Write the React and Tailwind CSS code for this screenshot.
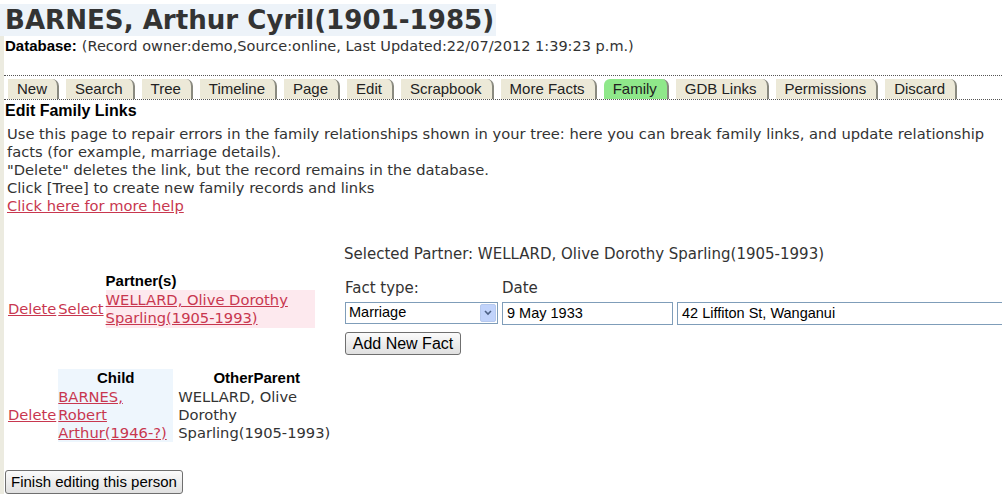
import React from "react";

const tabs = ["New","Search","Tree","Timeline","Page","Edit","Scrapbook","More Facts","Family","GDB Links","Permissions","Discard"];

const verdana = { fontFamily: '"DejaVu Sans", Verdana, sans-serif' };
const arial = { fontFamily: '"Liberation Sans", Arial, sans-serif' };

function Tab({ label }) {
  const active = label === "Family";
  return (
    <div
      className={`h-[20px] leading-[20px] pl-[9px] pr-[10px] whitespace-nowrap rounded-tr-[7px] border-r-2 border-[#8a8a80] text-[15px] text-[#222] ${active ? "bg-[#8fe88a] rounded-tl-[6px]" : "bg-[#ece9d8]"}`}
      style={arial}
    >
      {label}
    </div>
  );
}

export default function App() {
  return (
    <div className="w-[1002px] h-[504px] bg-white overflow-hidden text-[#333]" style={verdana}>
      <div className="pt-[4px]">
        <h1 className="inline-block bg-[#edf3f9] pl-[5px] pr-[2px] text-[26.1px] leading-[32px] font-bold text-[#333]" style={verdana}>
          BARNES, Arthur Cyril(1901-1985)
        </h1>
      </div>
      <div className="flex">
        <div className="w-[4px] bg-[#ecebe0] shrink-0" />
        <div className="flex-1 min-w-0">
          <div className="pl-[1px] h-[19px] leading-[19px] whitespace-nowrap">
            <span className="font-bold text-black text-[15px]" style={arial}>Database:</span>{" "}
            <span className="text-[14.5px]">(Record owner:demo,Source:online, Last Updated:22/07/2012 1:39:23 p.m.)</span>
          </div>
          <div className="mt-[20px] border-t border-b border-dotted border-[#555] flex gap-[7px] pl-[4px] pt-[3px]">
            {tabs.map((t) => <Tab key={t} label={t} />)}
          </div>
          <div className="pl-[1px] pt-[1px] text-[16px] leading-[19px] font-bold text-black" style={arial}>Edit Family Links</div>
          <div className="pl-[3px] pt-[5px] text-[14.7px] leading-[18px] pr-[6px]">
            <div>Use this page to repair errors in the family relationships shown in your tree: here you can break family links, and update relationship facts (for example, marriage details).</div>
            <div>"Delete" deletes the link, but the record remains in the database.</div>
            <div>Click [Tree] to create new family records and links</div>
            <a href="#" className="text-[#c8374f] underline">Click here for more help</a>
          </div>

          <div className="mt-[30px] flex items-start">
            <div className="w-[340px] shrink-0 pl-[2px] pt-[27px]">
              <table className="border-separate border-spacing-x-[2px] border-spacing-y-0 text-[14.7px] leading-[18px]">
                <thead>
                  <tr>
                    <th></th>
                    <th></th>
                    <th className="text-left font-bold text-black text-[15px] leading-[18px] p-0" style={arial}>Partner(s)</th>
                  </tr>
                </thead>
                <tbody>
                  <tr>
                    <td className="align-middle p-0"><a href="#" className="text-[#c8374f] underline">Delete</a></td>
                    <td className="align-middle p-0"><a href="#" className="text-[#c8374f] underline">Select</a></td>
                    <td className="align-middle p-0 pt-[1px] pb-[1px] bg-[#fde9ee] w-[209px]"><a href="#" className="text-[#c8374f] underline">WELLARD, Olive Dorothy Sparling(1905-1993)</a></td>
                  </tr>
                </tbody>
              </table>
            </div>
            <div className="flex-1 min-w-0 text-[15px]">
              <div className="leading-[18px] h-[18px] mb-[16px] whitespace-nowrap">Selected Partner: WELLARD, Olive Dorothy Sparling(1905-1993)</div>
              <div className="flex leading-[18px]">
                <div className="w-[158px] pl-[1px]">Fact type:</div>
                <div>Date</div>
              </div>
              <div className="flex gap-[4px] mt-[5px] items-start whitespace-nowrap" style={arial}>
                <div className="ml-[1px] w-[153px] h-[22px] border border-[#7f9db9] flex items-center text-[14.5px] text-black bg-white">
                  <span className="flex-1 pl-[3px]">Marriage</span>
                  <span className="w-[16px] h-[18px] mr-[1px] bg-[#c1d3fb] border border-[#b6c9ee] rounded-[2px] flex items-center justify-center">
                    <svg width="8" height="6" viewBox="0 0 8 6"><path d="M1 1 L4 4 L7 1" stroke="#4d6185" strokeWidth="1.6" fill="none" /></svg>
                  </span>
                </div>
                <div className="w-[171px] h-[23px] border border-[#7f9db9] bg-white text-[14.5px] text-black pl-[4px] leading-[21px]">9 May 1933</div>
                <div className="flex-1 h-[23px] border border-[#7f9db9] border-r-0 bg-white text-[14.5px] text-black pl-[4px] leading-[21px]">42 Liffiton St, Wanganui</div>
              </div>
              <div className="mt-[7px]">
                <button className="ml-[1px] w-[116px] h-[23px] border border-[#6f6f6f] rounded-[3px] bg-gradient-to-b from-[#fbfbfb] to-[#e0e0e0] text-[16px] text-black leading-[20px]" style={arial}>Add New Fact</button>
              </div>
            </div>
          </div>

          <div className="mt-[14px] pl-[2px]">
            <table className="border-separate border-spacing-x-[2px] border-spacing-y-0 text-[14.7px] leading-[18px]">
              <thead>
                <tr>
                  <th></th>
                  <th className="bg-[#eef6fd] font-bold text-black text-[15px] leading-[18px] text-center p-0" style={arial}>Child</th>
                  <th className="font-bold text-black text-[15px] leading-[18px] text-center p-0 pl-[3px]" style={arial}>OtherParent</th>
                </tr>
              </thead>
              <tbody>
                <tr>
                  <td className="align-middle p-0"><a href="#" className="text-[#c8374f] underline">Delete</a></td>
                  <td className="align-top p-0 pt-[1px] bg-[#eef6fd] w-[115px]"><a href="#" className="text-[#c8374f] underline">BARNES, Robert Arthur(1946-?)</a></td>
                  <td className="align-top p-0 pt-[1px] pl-[3px] w-[160px]">WELLARD, Olive Dorothy Sparling(1905-1993)</td>
                </tr>
              </tbody>
            </table>
          </div>

          <div className="mt-[28px] pl-[1px]">
            <button className="w-[178px] h-[24px] border border-[#6f6f6f] rounded-[3px] bg-gradient-to-b from-[#fbfbfb] to-[#e0e0e0] text-[15px] text-black leading-[20px]" style={arial}>Finish editing this person</button>
          </div>
        </div>
      </div>
    </div>
  );
}
